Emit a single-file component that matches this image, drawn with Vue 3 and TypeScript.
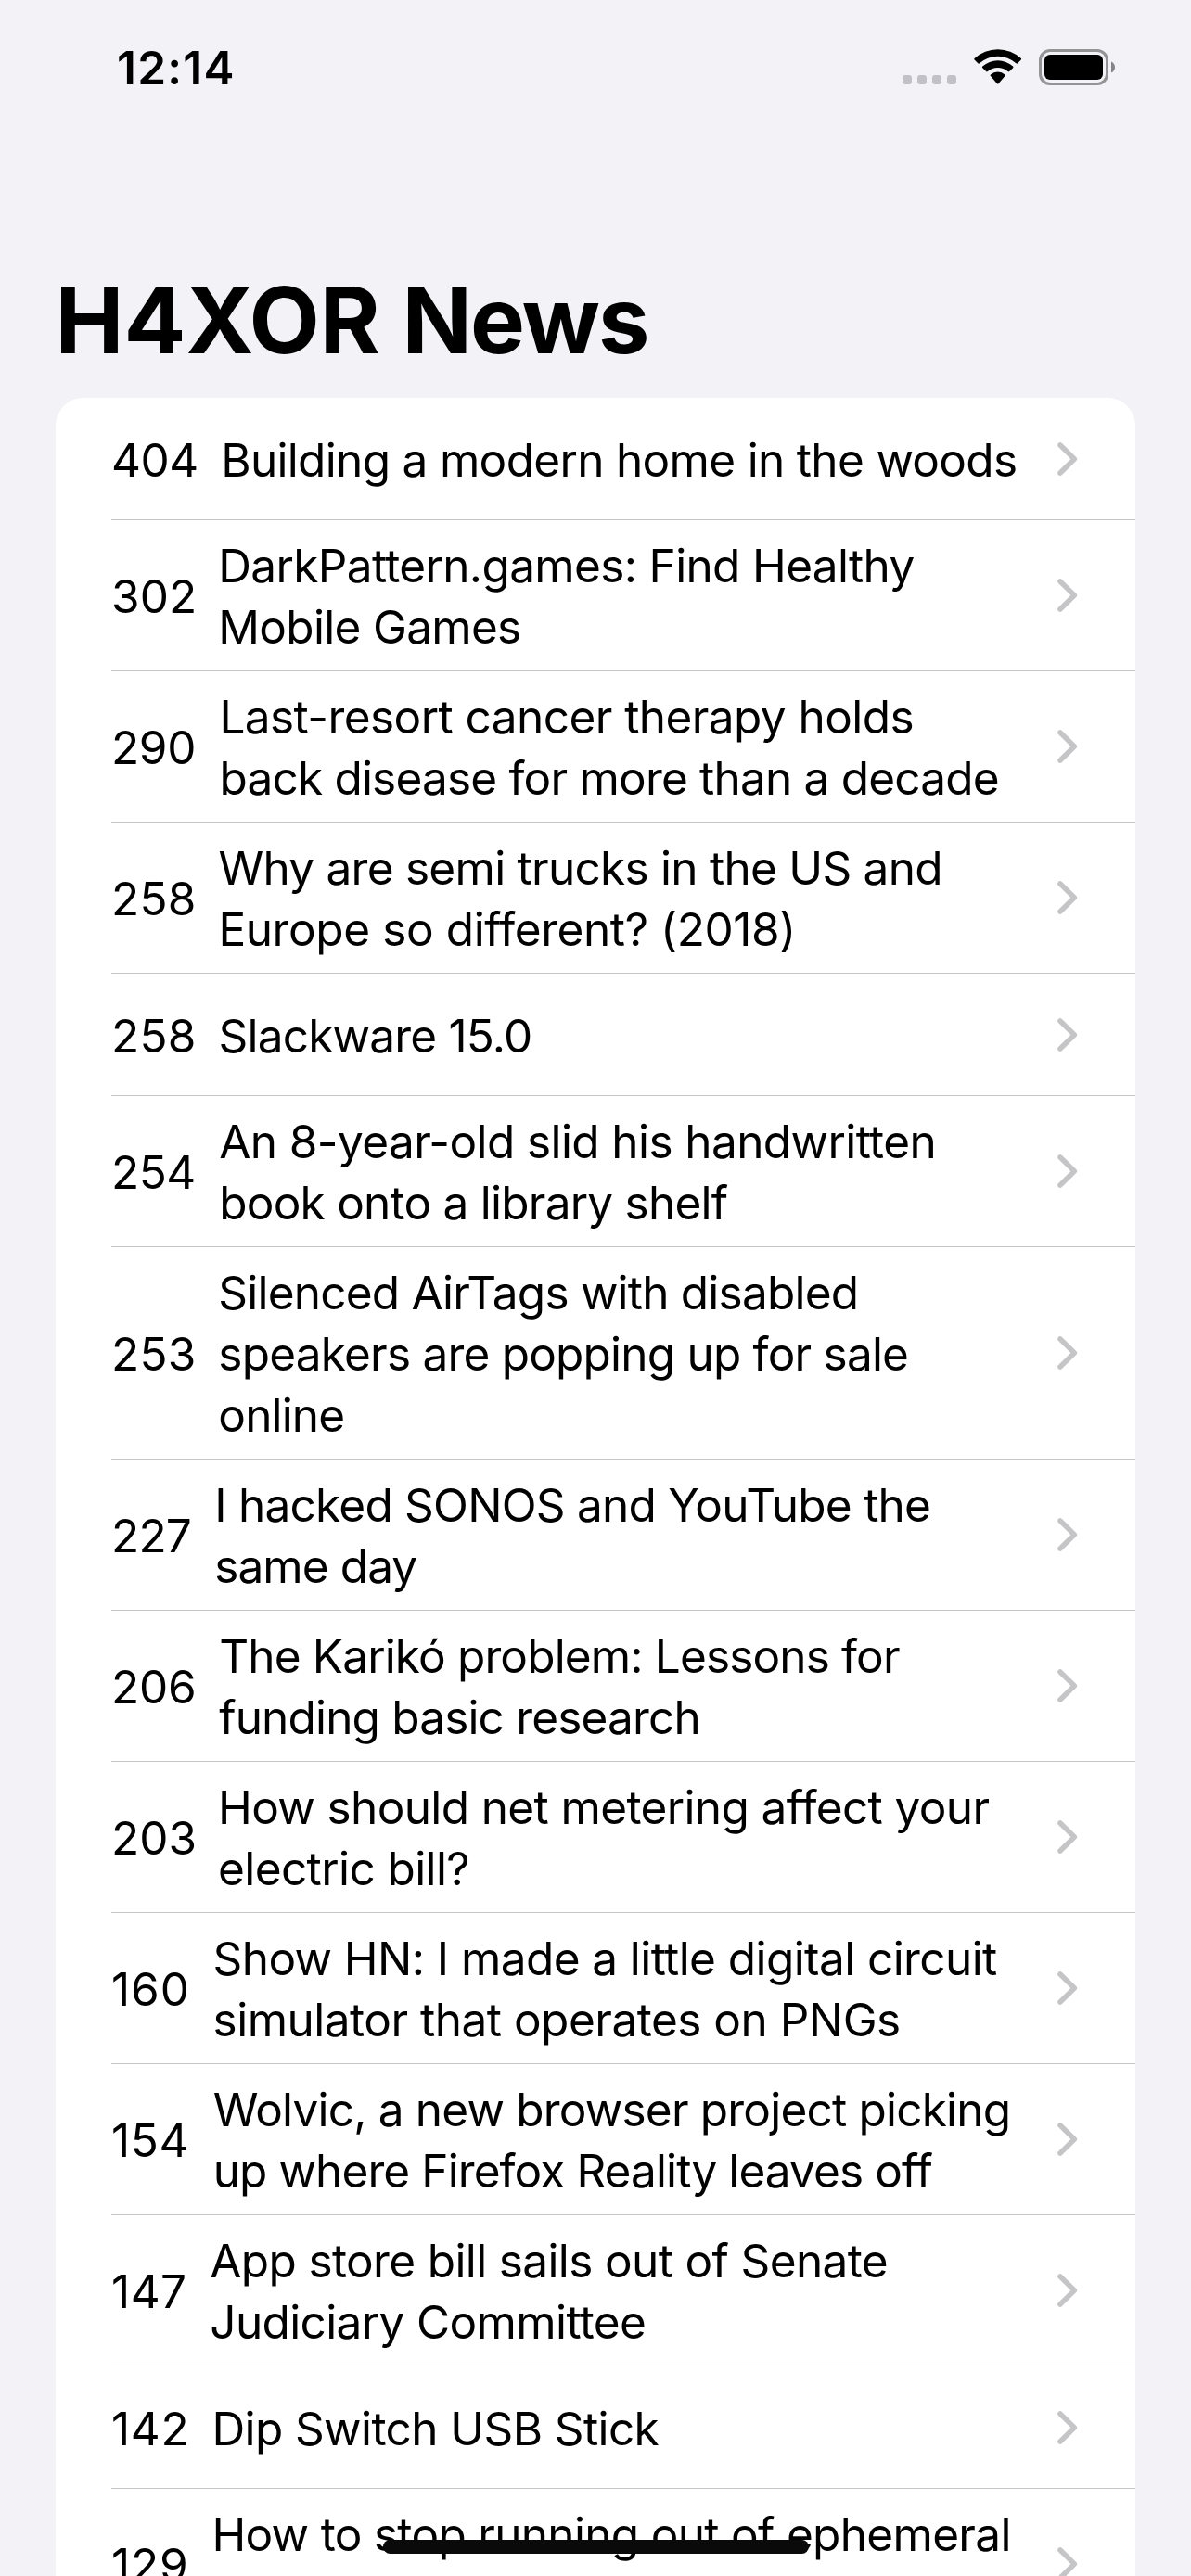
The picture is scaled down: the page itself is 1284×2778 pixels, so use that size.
<script setup lang="ts">
interface Line {
  text: string
  tracking: number
}

interface Post {
  id: number
  points: number
  pointsWidth: number
  pointsTracking: number
  lines: Line[]
}

const line = (text: string, tracking: number): Line => ({ text, tracking })

const post = (
  id: number,
  points: number,
  pointsWidth: number,
  pointsTracking: number,
  ...lines: Line[]
): Post => ({ id, points, pointsWidth, pointsTracking, lines })

const posts: Post[] = [
  post(1, 404, 94.2, -0.5, line('Building a modern home in the woods', -0.675)),
  post(2, 302, 91.3, 0.1, line('DarkPattern.games: Find Healthy', -0.65), line('Mobile Games', -0.69)),
  post(3, 290, 92.4, -0.34, line('Last-resort cancer therapy holds', -0.561), line('back disease for more than a decade', -0.793)),
  post(4, 258, 91.4, 0.2, line('Why are semi trucks in the US and', -0.733), line('Europe so different? (2018)', -0.4)),
  post(5, 258, 91.5, 0.2, line('Slackware 15.0', -0.791)),
  post(6, 254, 92.2, -0.5, line('An 8-year-old slid his handwritten', -0.59), line('book onto a library shelf', -0.76)),
  post(7, 253, 91.3, 0.2, line('Silenced AirTags with disabled', -0.787), line('speakers are popping up for sale', -0.787), line('online', -0.85)),
  post(8, 227, 87.2, -0.8, line('I hacked SONOS and YouTube the', -0.754), line('same day', -0.9)),
  post(9, 206, 92.2, -0.2, line('The Karikó problem: Lessons for', -0.851), line('funding basic research', -0.828)),
  post(10, 203, 91, 0.1, line('How should net metering affect your', -0.624), line('electric bill?', -0.596)),
  post(11, 160, 85.5, 0.9, line('Show HN: I made a little digital circuit', -0.575), line('simulator that operates on PNGs', -0.495)),
  post(12, 154, 85.7, 0.6, line('Wolvic, a new browser project picking', -0.8), line('up where Firefox Reality leaves off', -0.9)),
  post(13, 147, 82.3, 0.5, line('App store bill sails out of Senate', -0.631), line('Judiciary Committee', -0.63)),
  post(14, 142, 84.4, 0.7, line('Dip Switch USB Stick', -0.595)),
  post(15, 129, 84.4, 0.9, line('How to stop running out of ephemeral', -0.683), line('\u00a0', 0)),
]
</script>

<template>
  <div class="screen">
    <header class="status">
      <span class="clock">12:14</span>
      <div class="indicators">
        <div class="signal"><i v-for="n in 4" :key="n" /></div>
        <svg class="wifi" width="52" height="40" viewBox="1050 53 52 40">
          <path d="M1050.6 64.6a1.2 1.2 0 0 1 0-1.6a37 37 0 0 1 50.2 0a1.2 1.2 0 0 1 0 1.6l-3.7 3.7a1.3 1.3 0 0 1-1.7 0a29.5 29.5 0 0 0-39.4 0a1.3 1.3 0 0 1-1.7 0z" />
          <path d="M1059.3 73.3a1.2 1.2 0 0 1 0-1.7a24.4 24.4 0 0 1 32.8 0a1.2 1.2 0 0 1 0 1.7l-3.8 3.8a1.3 1.3 0 0 1-1.7 0a16.6 16.6 0 0 0-21.8 0a1.3 1.3 0 0 1-1.7 0z" />
          <path d="M1068 82.1a1.1 1.1 0 0 1 0-1.7a12 12 0 0 1 15.4 0a1.1 1.1 0 0 1 0 1.7l-6.8 7.9a1.2 1.2 0 0 1-1.8 0z" />
        </svg>
        <svg class="battery" width="84" height="40" viewBox="1120 53 84 40">
          <rect x="1121.5" y="54.5" width="72" height="36" rx="10.5" fill="none" stroke="#949496" stroke-width="3" />
          <rect x="1126" y="59" width="63" height="27" rx="6" />
          <path d="M1198 66.5c2.5 1 4 3.4 4 6s-1.500 5-4 6z" fill="#858587" />
        </svg>
      </div>
    </header>

    <h1 class="heading"><span class="brand">H4XOR</span> <span class="subject">News</span></h1>

    <ul class="list">
      <li v-for="p in posts" :key="p.id" class="row">
        <span
          class="points"
          :style="{ width: p.pointsWidth + 'px', letterSpacing: p.pointsTracking + 'px' }"
        >{{ p.points }}</span>
        <div class="title">
          <span
            v-for="l in p.lines"
            :key="l.text"
            class="line"
            :style="{ letterSpacing: l.tracking + 'px' }"
          >{{ l.text }}</span>
        </div>
        <svg class="chevron" width="22" height="38" viewBox="0 0 22 38">
          <path d="M3 3.900L18.300 19L3 34.100" fill="none" stroke="#c5c5c7" stroke-width="5.600" stroke-linecap="round" stroke-linejoin="round" />
        </svg>
      </li>
    </ul>

    <div class="home-indicator" />
  </div>
</template>

<style>
body {
  margin: 0;
  background: #f2f2f7;
}
</style>

<style scoped>
.screen {
  position: relative;
  display: flex;
  flex-direction: column;
  width: 1284px;
  height: 2778px;
  overflow: hidden;
  background: #f2f2f7;
  color: #000;
  font-family: Inter, 'Liberation Sans', sans-serif;
}

.status {
  display: flex;
  flex: none;
  justify-content: space-between;
  align-items: flex-start;
  height: 141px;
  box-sizing: border-box;
  padding: 43px 80px 0 126px;
}

.clock {
  font-size: 49.5px;
  font-weight: 600;
  line-height: 60px;
  letter-spacing: 1.250px;
}

.indicators {
  display: flex;
  align-items: flex-start;
  padding-top: 10px;
}

.signal {
  display: flex;
  gap: 6px;
  margin: 28px 19px 0 0;
}

.signal i {
  width: 10px;
  height: 10px;
  border-radius: 3px;
  background: #c2c1c7;
}

.wifi {
  margin-right: 18px;
}

.heading {
  flex: none;
  height: 288px;
  box-sizing: border-box;
  margin: 0;
  padding: 143px 0 0 59.400px;
  font-size: 99px;
  font-weight: 700;
  line-height: 122px;
}

.brand {
  letter-spacing: 0.1px;
}

.subject {
  letter-spacing: -1.9px;
}

.list {
  flex: none;
  margin: 0 60px;
  padding: 0;
  border-radius: 30px 30px 0 0;
  background: #fff;
  list-style: none;
}

.row {
  display: flex;
  align-items: center;
  min-height: 132px;
  box-sizing: border-box;
  margin-left: 60px;
  padding: 15px 62px 15px 0;
  border-bottom: 1px solid #c5c5c7;
  font-size: 49.5px;
  line-height: 66px;
  white-space: nowrap;
}

.points {
  flex: none;
  margin-right: 24px;
}

.title {
  display: flex;
  flex: 1;
  flex-direction: column;
  min-width: 0;
}

.points,
.line {
  padding-top: 1px;
  margin-bottom: -1px;
}

.chevron {
  flex: none;
}

.home-indicator {
  position: absolute;
  left: 413px;
  top: 2739px;
  width: 459px;
  height: 15px;
  border-radius: 8px;
  background: #0a0a0b;
}
</style>
